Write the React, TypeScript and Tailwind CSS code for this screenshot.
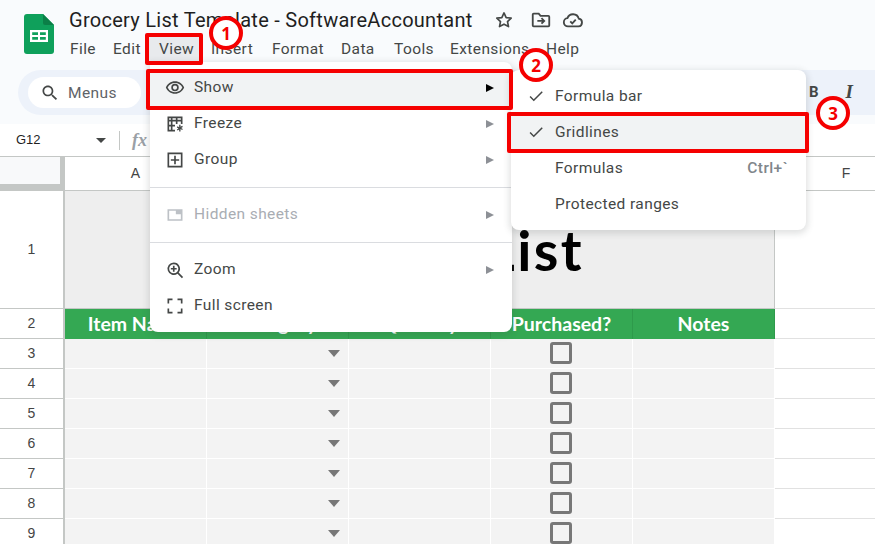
import React from "react";

const R = "font-['Roboto',sans-serif]";

function Logo() {
  return (
    <svg width="30" height="40" viewBox="0 0 30 40" className="shrink-0">
      <path d="M3 0H19L30 11V37a3 3 0 0 1-3 3H3a3 3 0 0 1-3-3V3a3 3 0 0 1 3-3z" fill="#0fa05b" />
      <path d="M19 0L30 11H21a2 2 0 0 1-2-2z" fill="#0b7f47" />
      <path d="M6 16H24V28H6zM8.2 18.2V21H14V18.2zM16 18.2V21H21.8V18.2zM8.2 23V25.8H14V23zM16 23V25.8H21.8V23z" fill="#fff" fillRule="evenodd" />
    </svg>
  );
}

function Ico({ children, size = 20, cls = "" }: { children: React.ReactNode; size?: number; cls?: string }) {
  return (
    <svg width={size} height={size} viewBox="0 0 24 24" fill="#444746" className={"shrink-0 " + cls}>
      {children}
    </svg>
  );
}

const Eye = () => (
  <Ico>
    <path d="M12 6a9.77 9.77 0 0 1 8.82 5.5A9.77 9.77 0 0 1 12 17a9.77 9.77 0 0 1-8.82-5.5A9.77 9.77 0 0 1 12 6m0-2C7 4 2.73 7.11 1 11.5 2.73 15.89 7 19 12 19s9.27-3.11 11-7.5C21.27 7.11 17 4 12 4zm0 5a2.5 2.5 0 1 1 0 5 2.5 2.5 0 0 1 0-5m0-2a4.5 4.5 0 1 0 0 9 4.5 4.5 0 0 0 0-9z" />
  </Ico>
);
const Freeze = () => (
  <Ico>
    <path d="M3 3h18v9h-2V9h-4v3h-2V9H9v4h3v2H9v4h3v2H3V3zm2 2v2h2V5H5zm4 0v2h4V5H9zm6 0v2h4V5h-4zM5 9v4h2V9H5zm0 6v4h2v-4H5z" />
    <path d="M17 13h1.6v2.3l2-1.1.8 1.3-2 1.2 2 1.2-.8 1.3-2-1.1V21H17v-2.3l-2 1.1-.8-1.3 2-1.2-2-1.2.8-1.3 2 1.1z" />
  </Ico>
);
const Group = () => (
  <Ico>
    <path d="M3 3h18v18H3V3zm2 2v14h14V5H5zm6 2h2v4h4v2h-4v4h-2v-4H7v-2h4V7z" />
  </Ico>
);
const Hidden = () => (
  <svg width="20" height="20" viewBox="0 0 24 24" className="shrink-0">
    <path d="M3 5h18v14H3V5zm2 2v10h14v-6h-6V7H5z" fill="#bdc1c6" fillRule="evenodd" />
  </svg>
);
const Zoom = () => (
  <Ico>
    <path d="M10.5 3a7.5 7.5 0 0 1 5.93 12.09l5.29 5.3-1.41 1.41-5.3-5.29A7.5 7.5 0 1 1 10.5 3zm0 2a5.5 5.5 0 1 0 0 11 5.5 5.5 0 0 0 0-11zm-1 2h2v2.5H14v2h-2.5V14h-2v-2.5H7v-2h2.5V7z" />
  </Ico>
);
const Full = () => (
  <Ico>
    <path d="M3 3h6v2H5v4H3V3zm12 0h6v6h-2V5h-4V3zM3 15h2v4h4v2H3v-6zm16 0h2v6h-6v-2h4v-4z" />
  </Ico>
);
const Check = () => (
  <Ico size={18}>
    <path d="M9 16.2 4.8 12l-1.4 1.4L9 19 21 7l-1.4-1.4z" />
  </Ico>
);

function Arrow({ dark = false }: { dark?: boolean }) {
  return (
    <svg width="8" height="8" viewBox="0 0 8 8" className="shrink-0">
      <path d="M0 0L8 4L0 8z" fill={dark ? "#000" : "#8d9096"} />
    </svg>
  );
}

const menuText = "text-[15.5px] tracking-[0.4px]";

function MenuRow({
  icon,
  label,
  hover = false,
  disabled = false,
  arrow = true,
}: {
  icon: React.ReactNode;
  label: string;
  hover?: boolean;
  disabled?: boolean;
  arrow?: boolean;
}) {
  return (
    <div className={"flex h-9 items-center pl-[15px] pr-[18px] " + menuText + " " + (hover ? "bg-[#f1f3f4] " : "") + (disabled ? "text-[#a9adb3]" : "text-[#444746]")}>
      <div className="flex w-[29px] shrink-0">{icon}</div>
      <span className="flex-1">{label}</span>
      {arrow && <Arrow dark={hover} />}
    </div>
  );
}

function SubRow({ label, check = false, hover = false, hint }: { label: string; check?: boolean; hover?: boolean; hint?: string }) {
  return (
    <div className={"flex h-9 items-center pl-[16px] pr-[18px] text-[#444746] " + menuText + " " + (hover ? "bg-[#f1f3f4]" : "")}>
      <div className="flex w-[28px] shrink-0">{check && <Check />}</div>
      <span className="flex-1 pt-[2px]">{label}</span>
      {hint && <span className="pt-[2px] font-medium text-[#80868b]">{hint}</span>}
    </div>
  );
}

function Badge({ n, cls }: { n: number; cls: string }) {
  return (
    <div className={"absolute flex h-[34px] w-[34px] items-center justify-center rounded-full border-[4px] border-[#f50000] bg-white font-['Open_Sans',sans-serif] text-[17px] font-bold leading-none text-[#f50000] " + cls}>
      {n}
    </div>
  );
}

const columns = ["w-[142px]", "w-[142px]", "w-[142px]", "w-[142px]", "w-[142px]"];
const heads = ["Item Name", "Category", "Quantity", "Purchased?", "Notes"];
const comic = "font-['Lato',sans-serif]";

function RowHead({ n, h }: { n: number; h: string }) {
  return (
    <div className={"flex w-[65px] shrink-0 items-center justify-center border-r-2 border-b border-[#c4c7c5] bg-white font-['Liberation_Sans',sans-serif] text-[14px] text-[#444] " + h}>
      {n}
    </div>
  );
}

function DataRow({ n }: { n: number }) {
  return (
    <div className="flex">
      <RowHead n={n} h="h-[30px]" />
      {columns.map((w, i) => (
        <div key={i} className={"relative flex h-[30px] shrink-0 items-center justify-center border-r border-b border-white bg-[#f3f3f3] pb-[2px] pr-[2px] " + w}>
          {i === 1 && (
            <svg width="12" height="7" viewBox="0 0 12 7" className="absolute right-[8px] top-[11px]">
              <path d="M0 0H12L6 7z" fill="#777" />
            </svg>
          )}
          {i === 3 && <div className="h-[22px] w-[22px] rounded-[3px] border-[3px] border-[#777]" />}
        </div>
      ))}
      <div className="h-[30px] flex-1 border-b border-[#e1e1e1] bg-white" />
    </div>
  );
}

export default function App() {
  return (
    <div className={"relative h-[544px] w-[875px] overflow-hidden bg-white " + R}>
      {/* app header */}
      <div className="h-[124px] bg-[#f9fbfd] pt-[7px]">
        <div className="flex h-[58px]">
          <div className="pl-[24px] pt-[7px]">
            <Logo />
          </div>
          <div className="pl-[15px]">
            <div className="flex items-center">
              <span className="w-[404px] whitespace-nowrap text-[20px] leading-[26px] tracking-[0.27px] text-[#1f1f1f]">Grocery List Template - SoftwareAccountant</span>
              <svg width="20" height="20" viewBox="0 0 24 24" className="ml-[21px]" fill="none" stroke="#444746" strokeWidth="2">
                <path d="M12 3.5l2.6 5.6 6 .7-4.4 4.1 1.2 6L12 17l-5.4 2.9 1.2-6L3.4 9.8l6-.7z" strokeLinejoin="round" />
              </svg>
              <svg width="22" height="22" viewBox="0 0 24 24" className="ml-[16px]" fill="none" stroke="#444746" strokeWidth="2">
                <path d="M3 6a1 1 0 0 1 1-1h5.5l2 2.5H20a1 1 0 0 1 1 1V18a1 1 0 0 1-1 1H4a1 1 0 0 1-1-1z" />
                <path d="M8 13h7M12.5 10l3 3-3 3" />
              </svg>
              <svg width="22" height="22" viewBox="0 0 24 24" className="ml-[10px]" fill="none" stroke="#444746" strokeWidth="2">
                <path d="M6.5 19a4.5 4.5 0 0 1-.6-8.96A6.5 6.5 0 0 1 18.3 10.5 4.3 4.3 0 0 1 18 19z" />
                <path d="M9 13.5l2.2 2.2 3.8-4" />
              </svg>
            </div>
            <div className={"relative mt-[3px] ml-px flex leading-[26px] text-[#444746] " + menuText}>
              <span className="w-[43px]">File</span>
              <span className="w-[46px]">Edit</span>
              <span className="-ml-[11px] mr-[8px] h-[28px] w-[55px] bg-[#e8eaed] pl-[11px]">View</span>
              <span className="w-[61px]">Insert</span>
              <span className="w-[69px]">Format</span>
              <span className="w-[53px]">Data</span>
              <span className="w-[56px]">Tools</span>
              <span className="w-[96px]">Extensions</span>
              <span>Help</span>
            </div>
          </div>
        </div>
        <div className="ml-[18px] mt-[5px] flex h-[45px] items-center rounded-l-[23px] bg-[#edf2fa] pl-[10px]">
          <div className={"flex h-[31px] w-[113px] items-center rounded-full bg-white pl-[12px] text-[#5f6368] " + menuText}>
            <svg width="20" height="20" viewBox="0 0 24 24" fill="#444746" className="mt-px">
              <path d="M15.5 14h-.79l-.28-.27C15.41 12.59 16 11.11 16 9.5 16 5.91 13.09 3 9.5 3S3 5.91 3 9.5 5.91 16 9.5 16c1.61 0 3.09-.59 4.23-1.57l.27.28v.79l5 4.99L20.49 19l-4.99-5zm-6 0C7.01 14 5 11.99 5 9.5S7.01 5 9.5 5 14 7.01 14 9.5 11.99 14 9.5 14z" />
            </svg>
            <span className="ml-[8px] pt-[2px]">Menus</span>
          </div>
          <div className="flex-1" />
          <span className="mr-[27px] text-[15px] font-bold text-[#444746]">B</span>
          <span className="mr-[22px] font-['Liberation_Serif',serif] text-[19px] font-bold italic text-[#444746]">I</span>
        </div>
      </div>

      {/* formula bar */}
      <div className="flex h-[33px] items-center border-b border-[#c4c7c5] bg-white">
        <span className="ml-[16px] w-[80px] font-['Liberation_Sans',sans-serif] text-[13px] text-[#1f1f1f]">G12</span>
        <svg width="10" height="5" viewBox="0 0 10 5">
          <path d="M0 0H10L5 5z" fill="#444746" />
        </svg>
        <div className="ml-[13px] h-[19px] w-px bg-[#c4c7c5]" />
        <span className="ml-[12px] font-['Liberation_Serif',serif] text-[18px] font-bold italic text-[#9aa0a6]">fx</span>
      </div>

      {/* column headers */}
      <div className="flex h-[34px] border-b border-[#c4c7c5] bg-white">
        <div className="h-full w-[65px] shrink-0 border-r-[5px] border-b-[6px] border-[#c4c7c5] bg-[#f8f9fa]" />
        <div className="flex w-[142px] shrink-0 items-center justify-center border-r border-[#e1e1e1] font-['Liberation_Sans',sans-serif] text-[14px] text-[#444]">A</div>
        <div className="w-[568px] shrink-0 border-r border-[#c4c7c5]" />
        <div className="flex w-[142px] shrink-0 items-center justify-center font-['Liberation_Sans',sans-serif] text-[14px] text-[#444]">F</div>
      </div>

      {/* title row */}
      <div className="flex">
        <RowHead n={1} h="h-[118px]" />
        <div className={"flex h-[118px] w-[710px] shrink-0 items-center justify-center border-r border-b border-[#c4c7c5] bg-[#eeeeee] text-[56px] font-bold tracking-[2.4px] text-black " + comic}>
          Grocery List
        </div>
        <div className="h-[118px] flex-1 border-b border-[#e1e1e1] bg-white" />
      </div>

      {/* header row */}
      <div className="flex">
        <RowHead n={2} h="h-[30px]" />
        {heads.map((h, i) => (
          <div key={h} className={"flex h-[30px] shrink-0 items-center justify-center border-r border-[#2e9a4b] bg-[#34a853] pb-px text-[19.5px] font-bold text-white " + comic + " " + columns[i]}>
            {h}
          </div>
        ))}
        <div className="h-[30px] flex-1 border-b border-[#e1e1e1] bg-white" />
      </div>

      {[3, 4, 5, 6, 7, 8, 9].map((n) => (
        <DataRow key={n} n={n} />
      ))}

      {/* View menu */}
      <div className="absolute left-[150px] top-[62px] w-[362px] rounded-b-[8px] rounded-tr-[8px] bg-white py-2 shadow-[0_2px_6px_2px_rgba(60,64,67,0.15)]">
        <MenuRow icon={<Eye />} label="Show" hover />
        <MenuRow icon={<Freeze />} label="Freeze" />
        <MenuRow icon={<Group />} label="Group" />
        <div className="my-[9px] h-px bg-[#dadce0]" />
        <MenuRow icon={<Hidden />} label="Hidden sheets" disabled />
        <div className="my-[9px] h-px bg-[#dadce0]" />
        <MenuRow icon={<Zoom />} label="Zoom" />
        <MenuRow icon={<Full />} label="Full screen" arrow={false} />
      </div>

      {/* Show submenu */}
      <div className="absolute left-[511px] top-[70px] w-[295px] rounded-[8px] bg-white py-2 shadow-[0_2px_6px_2px_rgba(60,64,67,0.15)]">
        <SubRow label="Formula bar" check />
        <SubRow label="Gridlines" check hover />
        <SubRow label="Formulas" hint="Ctrl+`" />
        <SubRow label="Protected ranges" />
      </div>

      {/* annotations */}
      <div className="absolute left-[145px] top-[33px] h-[32px] w-[58px] rounded-[2px] border-[4px] border-[#f50000]" />
      <div className="absolute left-[146px] top-[69px] h-[41px] w-[367px] rounded-[2px] border-[4px] border-[#f50000]" />
      <div className="absolute left-[507px] top-[112px] h-[41px] w-[302px] rounded-[2px] border-[4px] border-[#f50000]" />
      <Badge n={1} cls="left-[209px] top-[16px]" />
      <Badge n={2} cls="left-[519px] top-[48px]" />
      <Badge n={3} cls="left-[816px] top-[96px]" />
    </div>
  );
}
